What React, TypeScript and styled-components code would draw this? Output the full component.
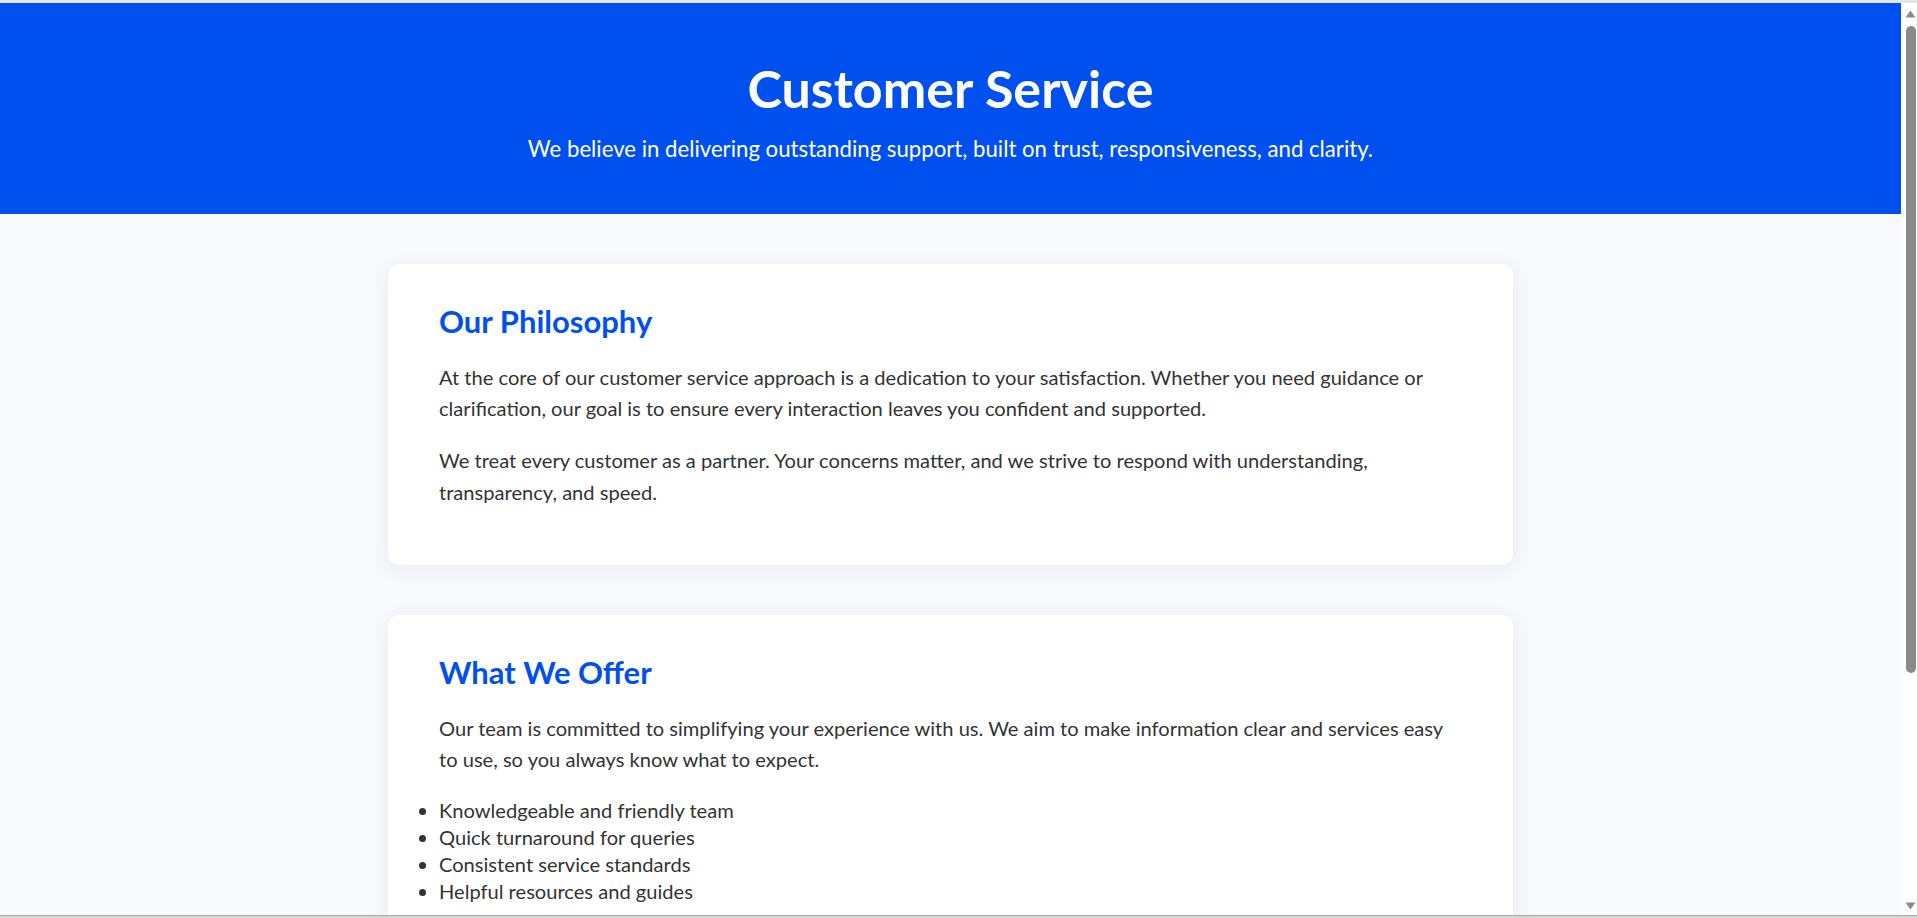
import React from "react";
import styled, { createGlobalStyle } from "styled-components";

const GlobalStyle = createGlobalStyle`
  html, body {
    margin: 0;
    padding: 0;
  }
  body {
    background: #f7f9fc;
    color: #333333;
    font-family: "Lato", "Open Sans", sans-serif;
    border-top: 3px solid #e2e6e0;
  }
`;

const Page = styled.div`
  display: flex;
  flex-direction: column;
  margin-right: 16px;
`;

const Hero = styled.header`
  background: #0050ef;
  color: #ffffff;
  text-align: center;
  padding: 54px 20px 48px;
`;

const HeroTitle = styled.h1`
  margin: 0 0 13px;
  font-size: 52px;
  line-height: 1.2;
  font-weight: 700;
`;

const HeroSubtitle = styled.p`
  margin: 0;
  font-size: 22.2px;
  line-height: 1.5;
`;

const Main = styled.main`
  display: flex;
  flex-direction: column;
  gap: 50px;
  width: 1125px;
  margin: 0 auto;
  padding: 50px 0 60px;
`;

const Card = styled.section`
  background: #ffffff;
  border-radius: 12px;
  box-shadow: 0 4px 22px rgba(20, 40, 90, 0.06);
  padding: 39px 51px 36px;
`;

const CardTitle = styled.h2`
  margin: 0 0 21.7px;
  color: #0050ef;
  font-size: 31px;
  line-height: 1.2;
  font-weight: 700;
`;

const Paragraph = styled.p`
  margin: 0 0 20px;
  font-size: 20.1px;
  line-height: 31.8px;
`;

const List = styled.ul`
  margin: 21px 0 20px;
  padding: 0;
  list-style: disc outside;
`;

const ListItem = styled.li`
  font-size: 20.1px;
  line-height: 26.9px;
`;

/* window chrome overlays: vertical scrollbar and bottom frame edge */
const ScrollTrack = styled.div`
  position: fixed;
  top: 3px;
  right: 0;
  bottom: 3px;
  width: 16px;
  background: #fdfdfd;
  display: flex;
  flex-direction: column;
  align-items: center;
  padding: 7px 0 5px 3px;
  box-sizing: border-box;
  gap: 8px;
`;

const ScrollArrow = styled.svg`
  flex: none;
  width: 11px;
  height: 8px;
  fill: #8d8d8d;
`;

const ScrollThumb = styled.div`
  flex: none;
  width: 10px;
  height: 647px;
  border-radius: 5px;
  background: #8a8a8a;
`;

const ScrollSpacer = styled.div`
  flex: 1;
`;

const FrameBottom = styled.div`
  position: fixed;
  left: 0;
  right: 0;
  bottom: 0;
  height: 3px;
  background: linear-gradient(#a9a9a9 0 1px, #d6d6d6 1px);
`;

const offers = [
  "Knowledgeable and friendly team",
  "Quick turnaround for queries",
  "Consistent service standards",
  "Helpful resources and guides",
];

export default function App() {
  return (
    <>
      <GlobalStyle />
      <Page>
        <Hero>
          <HeroTitle>Customer Service</HeroTitle>
          <HeroSubtitle>
            We believe in delivering outstanding support, built on trust, responsiveness, and clarity.
          </HeroSubtitle>
        </Hero>
        <Main>
          <Card>
            <CardTitle>Our Philosophy</CardTitle>
            <Paragraph>
              At the core of our customer service approach is a dedication to your satisfaction. Whether you need
              guidance or clarification, our goal is to ensure every interaction leaves you confident and supported.
            </Paragraph>
            <Paragraph>
              We treat every customer as a partner. Your concerns matter, and we strive to respond with understanding,
              transparency, and speed.
            </Paragraph>
          </Card>
          <Card>
            <CardTitle>What We Offer</CardTitle>
            <Paragraph>
              Our team is committed to simplifying your experience with us. We aim to make information clear and
              services easy to use, so you always know what to expect.
            </Paragraph>
            <List>
              {offers.map((o) => (
                <ListItem key={o}>{o}</ListItem>
              ))}
            </List>
          </Card>
        </Main>
      </Page>
      <ScrollTrack aria-hidden="true">
        <ScrollArrow viewBox="0 0 11 8">
          <path d="M5.5 0.5 L10.5 7.5 L0.5 7.5 Z" />
        </ScrollArrow>
        <ScrollThumb />
        <ScrollSpacer />
        <ScrollArrow viewBox="0 0 11 8">
          <path d="M0.5 0.5 L10.5 0.5 L5.5 7.5 Z" />
        </ScrollArrow>
      </ScrollTrack>
      <FrameBottom />
    </>
  );
}
